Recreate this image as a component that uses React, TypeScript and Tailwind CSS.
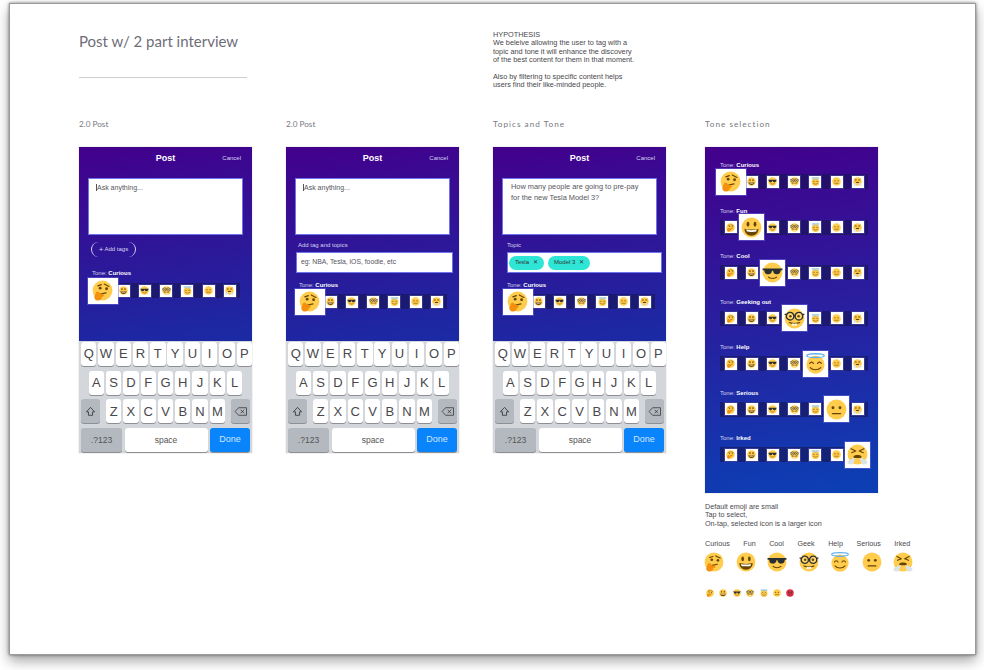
import React from "react";

type Kind = "curious" | "fun" | "cool" | "geek" | "help" | "serious" | "irked" | "angry";

const kinds: Kind[] = ["curious", "fun", "cool", "geek", "help", "serious", "irked"];

function Emoji({ kind, size }: { kind: Kind; size: number }) {
  const face = kind === "angry" ? "#dd2e44" : "#ffcc4d";
  return (
    <svg viewBox="0 0 36 36" width={size} height={size} className="block shrink-0">
      {kind === "help" ? (
        <circle cx="18" cy="20" r="15.5" fill={face} />
      ) : (
        <circle cx="18" cy="18" r="17" fill={face} />
      )}
      {kind === "curious" && (
        <React.Fragment>
          <path d="M10 10 L16 8 M21 7 L29 11" stroke="#664500" strokeWidth="2" strokeLinecap="round" fill="none" />
          <circle cx="14" cy="14" r="2.4" fill="#664500" />
          <circle cx="25" cy="15" r="2.4" fill="#664500" />
          <path d="M15 24 L24 22" stroke="#664500" strokeWidth="2" strokeLinecap="round" />
          <path d="M7 21 C11 19 14 22 14 24 L20 25 C22 27 19 29 17 29 C17 33 13 36 9 35 C4 34 3 29 5 26 Z" fill="#f4900c" />
        </React.Fragment>
      )}
      {kind === "fun" && (
        <React.Fragment>
          <ellipse cx="12" cy="12.5" rx="2.4" ry="4.2" fill="#664500" />
          <ellipse cx="24" cy="12.5" rx="2.4" ry="4.2" fill="#664500" />
          <path d="M6 20 C10 22 26 22 30 20 C30 27 25 32 18 32 C11 32 6 27 6 20 Z" fill="#664500" />
          <path d="M9 21.5 C13 23 23 23 27 21.5 L26 25 C22 26 14 26 10 25 Z" fill="#ffffff" />
        </React.Fragment>
      )}
      {kind === "cool" && (
        <React.Fragment>
          <path d="M1 11 H35 V14 H32 C32 20 28 21 25 21 C21 21 19 18 19 15 H17 C17 18 15 21 11 21 C8 21 4 20 4 14 H1 Z" fill="#292f33" />
          <path d="M11 26 C14 29 22 29 25 26" stroke="#664500" strokeWidth="2" strokeLinecap="round" fill="none" />
        </React.Fragment>
      )}
      {kind === "geek" && (
        <React.Fragment>
          <circle cx="10.5" cy="14" r="6.5" fill="#fff3" stroke="#292f33" strokeWidth="2.4" />
          <circle cx="25.5" cy="14" r="6.5" fill="#fff3" stroke="#292f33" strokeWidth="2.4" />
          <path d="M17 13 H19 M1 11 H4 M32 11 H35" stroke="#292f33" strokeWidth="2.4" />
          <circle cx="11" cy="14" r="2.2" fill="#664500" />
          <circle cx="25" cy="14" r="2.2" fill="#664500" />
          <path d="M9 25 C13 27 23 27 27 25" stroke="#664500" strokeWidth="2" fill="none" strokeLinecap="round" />
          <path d="M14 26.5 H17.5 V30.5 H14 Z M18.5 26.5 H22 V30.5 H18.5 Z" fill="#ffffff" />
        </React.Fragment>
      )}
      {kind === "help" && (
        <React.Fragment>
          <ellipse cx="18" cy="4.5" rx="15" ry="3.2" fill="none" stroke="#5dadec" strokeWidth="2.2" />
          <path d="M8 18 C9.5 15 13 15 14.5 18 M21.5 18 C23 15 26.5 15 28 18" stroke="#664500" strokeWidth="2" fill="none" strokeLinecap="round" />
          <path d="M9 25 C13 30 23 30 27 25" stroke="#664500" strokeWidth="2" fill="none" strokeLinecap="round" />
        </React.Fragment>
      )}
      {kind === "serious" && (
        <React.Fragment>
          <circle cx="12" cy="15" r="2.5" fill="#664500" />
          <circle cx="24" cy="15" r="2.5" fill="#664500" />
          <path d="M11 25 H25" stroke="#664500" strokeWidth="2.2" strokeLinecap="round" />
        </React.Fragment>
      )}
      {kind === "irked" && (
        <React.Fragment>
          <path d="M7 8 L15 12 L8 15 M29 8 L21 12 L28 15" stroke="#664500" strokeWidth="2" fill="none" strokeLinecap="round" strokeLinejoin="round" />
          <path d="M11 21 C14 18 22 18 25 21 L24 24 H12 Z" fill="#664500" />
          <path d="M12 24 C9 25 4 27 1 30 C0 34 5 35 9 35 C12 33 13 28 14 24 Z M24 24 C27 25 32 27 35 30 C36 34 31 35 27 35 C24 33 23 28 22 24 Z" fill="#d9e3e8" />
        </React.Fragment>
      )}
      {kind === "angry" && (
        <React.Fragment>
          <path d="M9 11 L15 14 M27 11 L21 14" stroke="#292f33" strokeWidth="2.4" strokeLinecap="round" />
          <circle cx="12" cy="17" r="2.4" fill="#292f33" />
          <circle cx="24" cy="17" r="2.4" fill="#292f33" />
          <path d="M12 26 C15 23 21 23 24 26" stroke="#292f33" strokeWidth="2" fill="none" strokeLinecap="round" />
        </React.Fragment>
      )}
    </svg>
  );
}

// row of 7 tone tiles, the selected one is larger and overflows the dark band
function ToneStrip({ selected }: { selected: number }) {
  return (
    <div className="flex h-[15px] w-fit items-center bg-[#15154f]/60">
      {kinds.map((k, i) => (
        <div key={k} className="flex h-[15px] w-[21.2px] items-center justify-center">
          {i === selected ? (
            <div className={(i === 0 ? "w-[30px] " : "w-[25px] ") + "z-10 flex h-[26px] shrink-0 items-center justify-center bg-white shadow-[0_0_0_1px_rgba(110,110,230,.5)]"}>
              <Emoji kind={k} size={21} />
            </div>
          ) : (
            <div className="flex h-[12px] w-[12px] shrink-0 items-center justify-center bg-white shadow-[0_0_0_1px_rgba(110,110,230,.35)]">
              <Emoji kind={k} size={9} />
            </div>
          )}
        </div>
      ))}
    </div>
  );
}

function ToneLabel({ name }: { name: string }) {
  return (
    <div className="text-[6px] leading-[8px] text-[#d5d3f0]">
      Tone: <span className="font-bold text-white">{name}</span>
    </div>
  );
}

function Key({ children, className = "bg-white" }: { children: React.ReactNode; className?: string }) {
  return (
    <div className={"flex h-[24px] shrink-0 items-center justify-center rounded-[3px] shadow-[0_1px_0_#8d8f94] " + className}>
      {children}
    </div>
  );
}

function Letters({ keys }: { keys: string }) {
  return (
    <div className="flex flex-1 justify-center gap-[1.9px]">
      {keys.split("").map((c) => (
        <Key key={c} className="w-[15.4px] bg-white text-[13px] font-light text-[#48484c]">{c}</Key>
      ))}
    </div>
  );
}

function Keyboard() {
  return (
    <div className="flex h-[112px] flex-col gap-[4.7px] bg-[#d3d6db] px-[2px] pt-[1px] font-['Liberation_Sans',sans-serif]">
      <div className="flex"><Letters keys="QWERTYUIOP" /></div>
      <div className="flex"><Letters keys="ASDFGHJKL" /></div>
      <div className="flex items-center">
        <Key className="w-[19px] bg-[#b4b8bf]">
          <svg viewBox="0 0 16 16" className="h-[11px] w-[11px]" fill="none" stroke="#333" strokeWidth="1.2" strokeLinejoin="round">
            <path d="M8 2 L14 8.5 H11 V13.5 H5 V8.5 H2 Z" />
          </svg>
        </Key>
        <Letters keys="ZXCVBNM" />
        <Key className="w-[19px] bg-[#b4b8bf]">
          <svg viewBox="0 0 20 16" className="h-[11px] w-[14px]" fill="none" stroke="#333" strokeWidth="1.1" strokeLinejoin="round">
            <path d="M6.5 2.5 H18 V13.5 H6.5 L1.5 8 Z M9.5 5.5 L14.5 10.5 M14.5 5.5 L9.5 10.5" />
          </svg>
        </Key>
      </div>
      <div className="flex justify-between">
        <Key className="w-[41px] bg-[#b4b8bf] text-[8.5px] text-[#555]">.?123</Key>
        <Key className="w-[83px] bg-white text-[8.5px] text-[#555]">space</Key>
        <Key className="w-[40px] bg-[#0a84fb] text-[9px] text-[#cfe6ff]">Done</Key>
      </div>
    </div>
  );
}

function Phone({ children, text }: { children: React.ReactNode; text?: React.ReactNode }) {
  return (
    <div className="w-[173px] font-['Liberation_Sans',sans-serif] shadow-[0_0_1px_rgba(0,0,0,.3)]">
      <div className="h-[194px] overflow-hidden bg-linear-[172deg,#43008c,#1a2ba4]">
        <div className="relative flex h-[31px] items-center justify-center pb-[8px] text-[9px] font-bold text-white">
          Post
          <span className="absolute right-[11px] top-[7px] text-[6px] font-normal text-[#d8d4f0]">Cancel</span>
        </div>
        <div className="mx-[9px] h-[57px] border border-[#6d73ea] bg-white px-[7px] pt-[3px] text-[7px] leading-[11px] text-[#55555c]">
          {text ?? <span className="border-l border-[#555]">Ask anything...</span>}
        </div>
        {children}
      </div>
      <Keyboard />
    </div>
  );
}

function Col({ label, className, children }: { label: string; className: string; children: React.ReactNode }) {
  return (
    <div className={className}>
      <div className="mb-[18px] h-[10px] font-['Lato',sans-serif] text-[8.2px] leading-[10px] text-[#77777f]">{label}</div>
      {children}
    </div>
  );
}

export default function App() {
  return (
    <div className="h-[670px] w-[984px] overflow-hidden bg-white pl-[9px] pt-[3px]">
      <div className="h-[652px] w-[967px] border border-[#9b9b9b] bg-white pl-[69px] pt-[26px] shadow-[0_6px_12px_rgba(0,0,0,.35),0_0_3px_rgba(0,0,0,.5)]">
        <div className="flex h-[89px]">
          <div className="w-[414px]">
            <div className="font-['Lato',sans-serif] text-[15px] leading-[22px] text-[#6e6e78]">Post w/ 2 part interview</div>
            <div className="mt-[25px] h-[1px] w-[168px] bg-[#cfcfcf]"></div>
          </div>
          <div className="mt-[1px] font-['Liberation_Sans',sans-serif] text-[7.3px] leading-[8.4px] text-[#48484c]">
            <div>HYPOTHESIS</div>
            <div>We beleive allowing the user to tag with a</div>
            <div>topic and tone it will enhance the discovery</div>
            <div>of the best content for them in that moment.</div>
            <div className="mt-[8.4px]">Also by filtering to specific content helps</div>
            <div>users find their like-minded people.</div>
          </div>
        </div>
        <div className="flex">
          <Col label="2.0 Post" className="w-[207px]">
            <Phone>
              <div className="mx-[12px] mt-[7px] flex h-[15px] w-[45px] items-center justify-center rounded-full border-x border-[#d5d3f0] text-[6px] text-[#d5d3f0]">
                <span className="mr-[1px] text-[8px] leading-none">+</span> Add tags
              </div>
              <div className="ml-[13px] mt-[12px]"><ToneLabel name="Curious" /></div>
              <div className="ml-[13px] mt-[6px]"><ToneStrip selected={0} /></div>
            </Phone>
          </Col>
          <Col label="2.0 Post" className="w-[207px]">
            <Phone>
              <div className="ml-[12px] mt-[6px] text-[6px] leading-[8px] text-[#d5d3f0]">Add tag and topics</div>
              <div className="ml-[10px] mr-[6px] mt-[3px] flex h-[21px] items-center border border-[#6d73ea] bg-white px-[4px] text-[6.8px] text-[#55555c]">eg: NBA, Tesla, iOS, foodie, etc</div>
              <div className="ml-[13px] mt-[8px]"><ToneLabel name="Curious" /></div>
              <div className="ml-[13px] mt-[5px]"><ToneStrip selected={0} /></div>
            </Phone>
          </Col>
          <Col label="Topics and Tone" className="w-[212px] [&>div:first-child]:tracking-[1px]">
            <Phone text={<div className="-mt-[1px] ml-[1px] text-[7.4px]">How many people are going to pre-pay<br />for the new Tesla Model 3?</div>}>
              <div className="ml-[14px] mt-[6px] text-[6px] leading-[8px] text-[#d5d3f0]">Topic</div>
              <div className="ml-[14px] mr-[4px] mt-[3px] flex h-[21px] items-center gap-[4px] border border-[#6d73ea] bg-white px-[1px] text-[6px] text-[#333]">
                <div className="flex h-[14px] w-[35px] items-center justify-between rounded-full bg-[#2fe6d6] px-[6px]"><span>Tesla</span><span>✕</span></div>
                <div className="flex h-[14px] w-[42px] items-center justify-between rounded-full bg-[#2fe6d6] px-[6px]"><span>Model 3</span><span>✕</span></div>
              </div>
              <div className="ml-[14px] mt-[8px]"><ToneLabel name="Curious" /></div>
              <div className="ml-[14px] mt-[5px]"><ToneStrip selected={0} /></div>
            </Phone>
          </Col>
          <Col label="Tone selection" className="w-[260px] [&>div:first-child]:tracking-[1px]">
            <div className="h-[346px] w-[173px] bg-linear-[172deg,#43008c,#0b40b4] pl-[15px] pt-[14px] font-['Liberation_Sans',sans-serif] shadow-[0_0_1px_rgba(0,0,0,.3)]">
              {["Curious", "Fun", "Cool", "Geeking out", "Help", "Serious", "Irked"].map((name, i) => (
                <div key={name} className="mb-[16.5px] h-[29px]">
                  <ToneLabel name={name} />
                  <div className="mt-[5px]"><ToneStrip selected={i} /></div>
                </div>
              ))}
            </div>
            <div className="mt-[10px] font-['Liberation_Sans',sans-serif] text-[7.2px] leading-[8.4px] text-[#4a4a4f]">
              <div>Default emoji are small</div>
              <div>Tap to select,</div>
              <div>On-tap, selected icon is a larger icon</div>
            </div>
            <div className="mt-[11px] flex gap-[13.5px] whitespace-nowrap font-['Liberation_Sans',sans-serif] text-[7.2px] leading-[9px] text-[#4a4a4f]">
              {["Curious", "Fun", "Cool", "Geek", "Help", "Serious", "Irked"].map((t) => (
                <span key={t}>{t}</span>
              ))}
            </div>
            <div className="-ml-[1px] mt-[4px] flex gap-[11.5px]">
              {kinds.map((k) => (
                <Emoji key={k} kind={k} size={20} />
              ))}
            </div>
            <div className="ml-[1px] mt-[17px] flex gap-[5.4px]">
              {(["curious", "fun", "cool", "geek", "help", "serious", "angry"] as Kind[]).map((k) => (
                <Emoji key={k} kind={k} size={8} />
              ))}
            </div>
          </Col>
        </div>
      </div>
    </div>
  );
}
